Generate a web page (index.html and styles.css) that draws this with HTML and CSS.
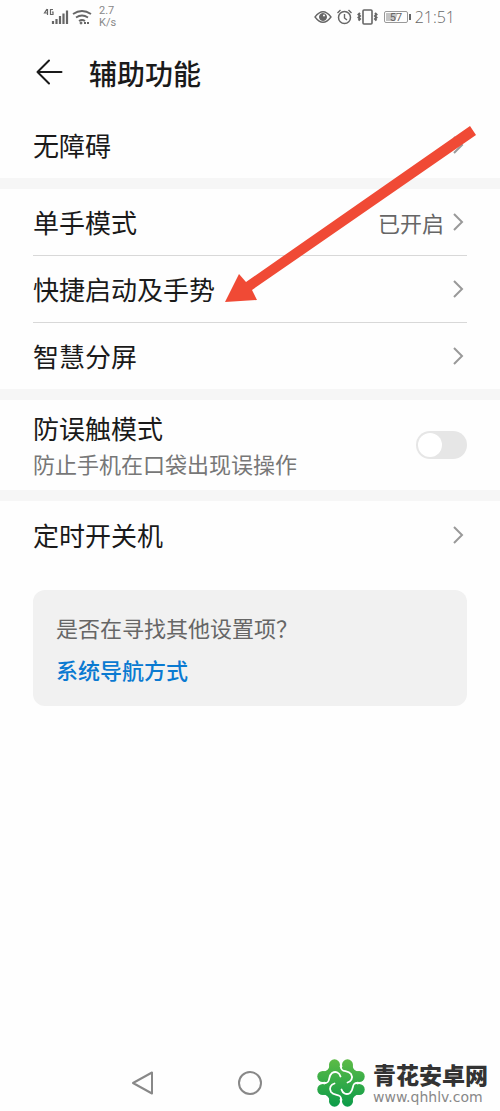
FILE: index.html
```html
<!DOCTYPE html>
<html lang="zh-CN">
<head>
<meta charset="utf-8">
<meta name="viewport" content="width=device-width, initial-scale=1">
<title>辅助功能</title>
<link rel="stylesheet" href="styles.css">
</head>
<body>
<div class="screen">
  <div class="status">
    <div class="status-group">
      <svg width="52" height="24" viewBox="0 0 52 24" fill="none" stroke="#666">
        <path d="M4 4 1.500 8H5M4.500 4v6M10 4.500H7.500v5H10V7H9" stroke-width="1.200"/>
        <path d="M10 19v-3M13.500 19v-5M17 19v-8M20.500 19V8.500M24 19V5.500" stroke-width="2.200"/>
        <path d="M30 9q9-6 18 0M33 12.500q6-4 12 0M36 16q3-2 6 0" stroke-width="1.800"/>
        <circle cx="38" cy="18" r="1" fill="#666"/><path d="M41 18h6" stroke-width="2" stroke-dasharray="2 1"/>
      </svg>
      <div class="speed"><span>2.7</span><span>K/s</span></div>
    </div>
    <div class="status-group">
      <svg width="98" height="20" viewBox="0 0 98 20" fill="none" stroke="#666">
        <path d="M2 10q8-10.500 16 0-8 10.500-16 0Z" stroke-width="1.300"/><circle cx="10" cy="10" r="3.500" fill="#666"/><circle cx="11" cy="8.500" r="1" fill="#fff" stroke="none"/>
        <circle cx="31.500" cy="10.500" r="6" stroke-width="1.500"/><path d="M31.500 7v4l2.500 2M24.500 6l3-3M38.500 6l-3-3" stroke-width="1.400"/>
        <rect x="50" y="3" width="9" height="14" rx="1" stroke-width="1.600"/><path d="M47 6l-1.500 1.500L47 9l-1.500 1.500L47 12l-1.500 1.500M62 6l1.500 1.500L62 9l1.500 1.500L62 12l1.500 1.500" stroke-width="2"/>
        <rect x="71.500" y="4.500" width="23" height="11" rx="1.500" stroke="#999"/><path d="M73 6h12l-3 8h-9Z" fill="#c4c4c4" stroke="none"/><path d="M97 7v6" stroke-width="2"/>
        <text x="83" y="14" class="battery-level">57</text>
      </svg>
      <span class="clock">21:51</span>
    </div>
  </div>

  <header class="header">
    <button class="back" aria-label="返回">
      <svg width="28" height="28" viewBox="0 0 28 28" fill="none" stroke="#1a1a1a" stroke-width="2" stroke-linecap="round" stroke-linejoin="round"><path d="M26.500 13H2.500M14 1.500 2.500 13 14 24.500"/></svg>
    </button>
    <h1 class="title">辅助功能</h1>
  </header>

  <main class="settings">
    <section class="group">
      <a class="row" href="#"><span>无障碍</span><svg class="chevron" viewBox="0 0 12 20"><path d="m2 2 8 8-8 8"/></svg></a>
    </section>
    <section class="group">
      <a class="row" href="#"><span>单手模式</span><span class="value">已开启</span><svg class="chevron" viewBox="0 0 12 20"><path d="m2 2 8 8-8 8"/></svg></a>
      <a class="row" href="#"><span>快捷启动及手势</span><svg class="chevron" viewBox="0 0 12 20"><path d="m2 2 8 8-8 8"/></svg></a>
      <a class="row" href="#"><span>智慧分屏</span><svg class="chevron" viewBox="0 0 12 20"><path d="m2 2 8 8-8 8"/></svg></a>
    </section>
    <section class="group">
      <label class="row row-tall" for="mistouch">
        <span class="row-text"><span>防误触模式</span><span class="hint">防止手机在口袋出现误操作</span></span>
        <input class="switch" id="mistouch" type="checkbox" role="switch">
      </label>
    </section>
    <section class="group">
      <a class="row row-last" href="#"><span>定时开关机</span><svg class="chevron" viewBox="0 0 12 20"><path d="m2 2 8 8-8 8"/></svg></a>
    </section>
    <aside class="card">
      <p class="question">是否在寻找其他设置项？</p>
      <a class="link" href="#">系统导航方式</a>
    </aside>
    <svg class="pointer" width="252" height="178" viewBox="0 0 252 178"><path d="M0 176 14 148l7 8L245 0l6 9L27 164l5 10Z" fill="#f04a35"/></svg>
  </main>

  <footer class="navbar">
    <div class="nav-buttons">
      <button class="nav-button" aria-label="后退"><svg width="26" height="26" viewBox="0 0 26 26"><path d="M22 2.500v21L3 13Z"/></svg></button>
      <button class="nav-button" aria-label="主页"><svg width="26" height="26" viewBox="0 0 26 26"><circle cx="13" cy="13" r="11"/></svg></button>
    </div>
    <div class="brand">
      <svg width="48" height="48" viewBox="0 0 48 48">
        <defs>
          <linearGradient id="leaf" gradientUnits="userSpaceOnUse" x1="0" y1="0" x2="0" y2="48"><stop stop-color="#5dbb46"/><stop offset="1" stop-color="#0b9b49"/></linearGradient>
          <path id="groove" d="M24 3v5C24 14 30.500 10.500 34 15 36.500 19 34 22.500 30.500 23.500"/>
        </defs>
        <g fill="url(#leaf)">
          <circle cx="17.500" cy="5.800" r="5.500"/><circle cx="30.500" cy="5.800" r="5.500"/>
          <circle cx="42.200" cy="17.500" r="5.500"/><circle cx="42.200" cy="30.500" r="5.500"/>
          <circle cx="30.500" cy="42.200" r="5.500"/><circle cx="17.500" cy="42.200" r="5.500"/>
          <circle cx="5.800" cy="30.500" r="5.500"/><circle cx="5.800" cy="17.500" r="5.500"/>
          <path d="M12.500 6Q12 12 6 12.500L8 23Q11 24 8 25L6 35.500Q12 36 12.500 42L23 40Q24 37 25 40L35.500 42Q36 36 42 35.500L40 25Q37 24 40 23L42 12.500Q36 12 35.500 6L25 8Q24 11 23 8Z"/>
        </g>
        <g fill="none" stroke="#fefefe" stroke-width="1.800" stroke-linecap="round">
          <use href="#groove"/><use href="#groove" transform="rotate(90 24 24)"/><use href="#groove" transform="rotate(180 24 24)"/><use href="#groove" transform="rotate(270 24 24)"/>
        </g>
      </svg>
      <div class="brand-text"><strong class="brand-name">青花安卓网</strong><span class="brand-url">www.qhhlv.com</span></div>
    </div>
  </footer>
</div>
</body>
</html>
```
FILE: styles.css
```css
* { box-sizing: border-box; }
body {
  margin: 0;
  background: #fefefe;
  color: #1a1a1a;
  font-family: "Noto Sans CJK SC", sans-serif;
}
a { color: inherit; text-decoration: none; }
button { border: 0; padding: 0; background: none; display: flex; }
svg { display: block; flex: none; }

.screen { min-height: 100vh; display: flex; flex-direction: column; }

.status {
  height: 34px;
  padding: 0 45px 0 43px;
  display: flex;
  justify-content: space-between;
  align-items: center;
}
.status-group { display: flex; align-items: center; gap: 4px; }
.speed {
  display: flex;
  flex-direction: column;
  font: 11px/12px Roboto, sans-serif;
  color: #888;
}
.battery-level { font: 11px Roboto, sans-serif; fill: #666; stroke: none; text-anchor: middle; }
.clock { font: 300 16px/20px "Open Sans", sans-serif; color: #666; }

.header { height: 78px; padding: 0 35px; display: flex; align-items: center; gap: 26px; }
.title { margin: 0; font-size: 28px; line-height: 40px; font-weight: 500; }

.settings { flex: 1; position: relative; }
.group + .group { border-top: 11px solid #f6f6f6; }
.row {
  height: 66px;
  margin: 0 33px;
  display: flex;
  align-items: center;
  justify-content: space-between;
  font-size: 26px;
  line-height: 36px;
}
.row + .row { height: 67px; border-top: 1px solid #d8d8d8; }
.row-tall { height: 90px; }
.row-last { height: 68px; }
.row-text { display: flex; flex-direction: column; }
.value { margin-left: auto; margin-right: 8px; font-size: 22px; color: #666; }
.hint { font-size: 22px; line-height: 34px; color: #777; }
.chevron { width: 12px; height: 20px; margin-right: 3px; fill: none; stroke: #999; stroke-width: 2; }

.switch {
  appearance: none;
  width: 51px;
  height: 28px;
  margin: 0;
  border-radius: 14px;
  background: #e6e6e6;
  padding: 2px;
}
.switch::before { content: ""; display: block; width: 24px; height: 24px; border-radius: 50%; background: #fff; }
.switch:checked::before { margin-left: auto; }

.card { margin: 21px 33px; padding: 20px 23px; border-radius: 12px; background: #f1f1f1; font-size: 22px; line-height: 34px; }
.question { margin: 0 0 8px; color: #666; }
.link { color: #0a7ad1; font-weight: 500; }

.pointer { position: absolute; left: 225px; top: 14px; }

.navbar {
  height: 56px;
  padding: 0 12px 0 130px;
  display: flex;
  align-items: center;
  justify-content: space-between;
}
.nav-buttons { display: flex; gap: 81px; }
.nav-button svg { fill: none; stroke: #888; stroke-width: 2; stroke-linejoin: round; }
.brand { display: flex; align-items: center; gap: 8px; white-space: nowrap; }
.brand-text { display: flex; flex-direction: column; gap: 2px; }
.brand-name { font-size: 23px; line-height: 25px; font-weight: 900; color: #333; }
.brand-url { font: 14px/16px "DejaVu Sans", sans-serif; color: #888; }
```
